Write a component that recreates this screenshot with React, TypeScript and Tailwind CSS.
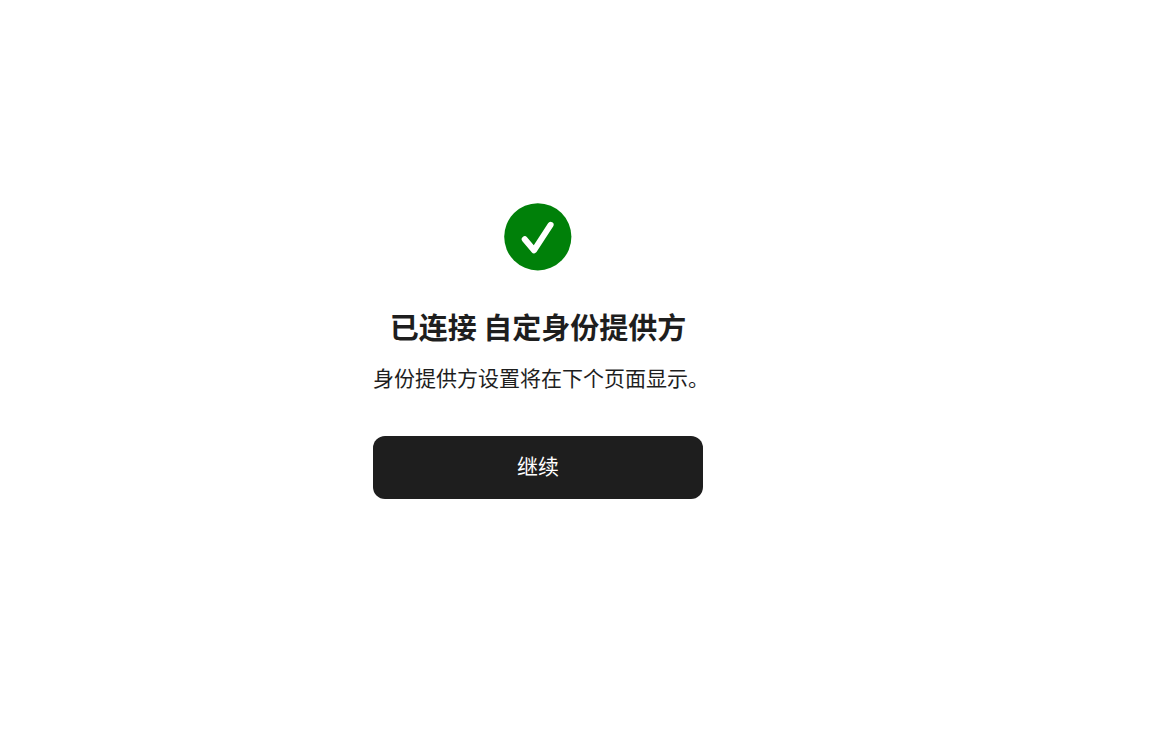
export default function App() {
  return (
    <main className="flex min-h-screen items-center justify-center bg-white pr-[73px] pb-[33px] font-['Noto_Sans_CJK_SC','Noto_Sans',sans-serif] text-[#1e1e1e]">
      <section className="flex w-[330px] flex-col items-center">
        <svg className="size-[68px]" viewBox="0 0 68 68" fill="none" aria-hidden="true">
          <circle cx="33.8" cy="33.8" r="33.6" fill="#008009" />
          <path
            d="M20.7 36.2L30 47.3L46.6 21.8"
            stroke="#fff"
            strokeWidth="6"
            strokeLinecap="round"
            strokeLinejoin="round"
          />
        </svg>
        <h1 className="mt-[35px] text-[29px] leading-10 font-bold whitespace-nowrap">
          已连接 自定身份提供方
        </h1>
        <p className="mt-[15px] self-start text-[21px] leading-8 whitespace-nowrap">
          身份提供方设置将在下个页面显示。
        </p>
        <button
          type="button"
          className="mt-[43px] h-[63px] w-full cursor-pointer rounded-xl bg-[#1e1e1e] pb-1 text-[21px] leading-8 text-white"
        >
          继续
        </button>
      </section>
    </main>
  );
}
